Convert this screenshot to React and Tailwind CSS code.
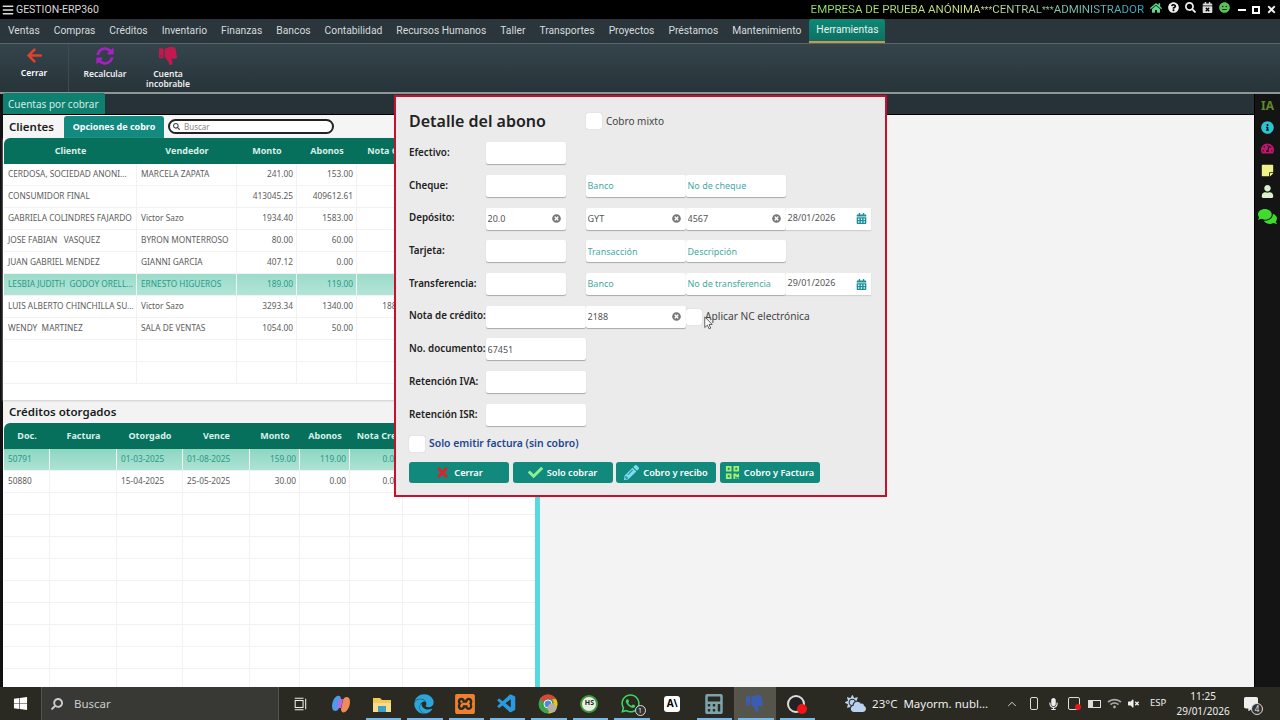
import {
  FaArrowLeft, FaSyncAlt, FaThumbsDown, FaHome, FaQuestionCircle, FaSearch, FaCalendarTimes, FaMeh,
  FaInfoCircle, FaTachometerAlt, FaStickyNote, FaUser, FaComments, FaTimes, FaCheck, FaPencilAlt,
  FaQrcode, FaTimesCircle, FaCalendarAlt, FaWindows, FaCalculator, FaEdge, FaWhatsapp,
  FaCloudSun, FaMicrophone, FaVolumeMute, FaWifi, FaCommentAlt, FaBars,
} from "react-icons/fa";
import { VscVscode } from "react-icons/vsc";
import { SiXampp } from "react-icons/si";
import { ChevronUp } from "lucide-react";

const menu = ["Ventas", "Compras", "Créditos", "Inventario", "Finanzas", "Bancos", "Contabilidad", "Recursos Humanos", "Taller", "Transportes", "Proyectos", "Préstamos", "Mantenimiento"];

const clientes = [
  ["CERDOSA, SOCIEDAD ANONI...", "MARCELA ZAPATA", "241.00", "153.00", ""],
  ["CONSUMIDOR FINAL", "", "413045.25", "409612.61", ""],
  ["GABRIELA COLINDRES FAJARDO", "Victor Sazo", "1934.40", "1583.00", ""],
  ["JOSE FABIAN   VASQUEZ", "BYRON MONTERROSO", "80.00", "60.00", ""],
  ["JUAN GABRIEL MENDEZ", "GIANNI GARCIA", "407.12", "0.00", ""],
  ["LESBIA JUDITH  GODOY ORELL...", "ERNESTO HIGUEROS", "189.00", "119.00", ""],
  ["LUIS ALBERTO CHINCHILLA SU...", "Victor Sazo", "3293.34", "1340.00", "1888.00"],
  ["WENDY  MARTINEZ", "SALA DE VENTAS", "1054.00", "50.00", ""],
  ["", "", "", "", ""],
  ["", "", "", "", ""],
];

const creditos = [
  ["50791", "", "01-03-2025", "01-08-2025", "159.00", "119.00", "0.00"],
  ["50880", "", "15-04-2025", "25-05-2025", "30.00", "0.00", "0.00"],
  ...Array.from({ length: 9 }, () => ["", "", "", "", "", "", ""]),
];

function Cell({ w, right, children }) {
  return (
    <div className={`${w} h-full shrink-0 flex items-center px-1 border-r border-[#f2f2f2] whitespace-pre overflow-hidden ${right ? "justify-end pr-[3px]" : ""}`}>
      {children}
    </div>
  );
}

function Field({ w = "w-[80px]", value, hint, clear, gap }) {
  return (
    <div className={`${w} ${gap || ""} h-[22px] shrink-0 bg-white rounded-[2px] shadow-[0_1px_1px_#a9a9a9] flex items-center pl-[1.5px] pr-[5px] text-[9px] text-[#555]`}>
      <span className={`flex-1 truncate ${hint ? "text-[#45aaa5]" : ""}`}>{value || hint}</span>
      {clear && <FaTimesCircle className="text-[9px] text-[#777] shrink-0" />}
    </div>
  );
}

function DateField({ value }) {
  return (
    <div className="w-[85px] h-[22px] shrink-0 flex items-center bg-white shadow-[0_1px_1px_#d0d0d0] pl-[1.5px] pr-[4px] text-[9px] text-[#555]">
      <span className="flex-1 -mt-[2px]">{value}</span>
      <FaCalendarAlt className="text-[11px] text-[#1b8f98]" />
    </div>
  );
}

function FormRow({ label, children }) {
  return (
    <div className="h-[32.7px] flex items-center">
      <div className="w-[77px] shrink-0 text-[9.8px] font-semibold text-[#222] whitespace-nowrap">{label}</div>
      {children}
    </div>
  );
}

function Check() {
  return <div className="w-[16px] h-[16px] bg-white rounded-[2px] shadow-[0_0_1px_#aaa] shrink-0" />;
}

function ModalButton({ icon, label }) {
  return (
    <button className="w-[100px] h-[21px] rounded-[3px] bg-[#11897d] text-white text-[9.2px] font-semibold flex items-center justify-center gap-[4px]">
      {icon}
      {label}
    </button>
  );
}

function TaskSlot({ children, active, running }) {
  return (
    <div className={`relative w-[41.4px] h-full shrink-0 flex items-center justify-center ${active ? "bg-[#55554c]" : ""}`}>
      {children}
      {running && <div className="absolute bottom-0 left-[4px] right-[2px] h-[2px] bg-[#76b9ed]" />}
    </div>
  );
}

export default function App() {
  return (
    <div className="relative w-[1280px] h-[720px] overflow-hidden bg-black font-['Noto_Sans',sans-serif]">
      {/* title bar */}
      <div className="h-[19px] bg-black flex items-center pl-[2px] text-[#d9d9d9] font-['Roboto',sans-serif]">
        <FaBars className="text-[12px] text-[#ddd]" />
        <span className="ml-[2px] text-[10.5px]">GESTION-ERP360</span>
        <div className="ml-auto flex items-center">
          <span className="text-[11.5px] bg-gradient-to-r from-[#8fe35a] via-[#cfe08a] to-[#2aa7c4] bg-clip-text text-transparent whitespace-nowrap">
            EMPRESA DE PRUEBA ANÓNIMA<span className="text-[9px]">***</span>CENTRAL<span className="text-[9px]">***</span>ADMINISTRADOR
          </span>
          <div className="ml-[6px] flex items-center gap-[6px] text-[11px] -mt-[4px]">
            <FaHome className="text-[#5fd38f] text-[12px]" />
            <FaQuestionCircle className="text-[#eee]" />
            <FaSearch className="text-[#eee]" />
            <FaCalendarTimes className="text-[#ddd]" />
            <FaMeh className="text-[#58c25a]" />
          </div>
          <div className="ml-[8px] mr-[3px] flex items-center gap-[6px] text-[#eee]">
            <div className="w-[8px] h-[2px] bg-white" />
            <div className="w-[8px] h-[8px] border-2 border-white" />
            <FaTimes className="text-[11px]" />
          </div>
        </div>
      </div>

      {/* menu */}
      <div className="h-[25px] bg-[#2a363c] border-b border-[#5a6569] flex items-end pl-[8px] text-[10.3px] text-[#d6dcdc] font-['Roboto',sans-serif]">
        <div className="flex gap-[14px] h-[24px] items-center">
          {menu.map((m) => <span key={m} className="whitespace-nowrap">{m}</span>)}
        </div>
        <div className="ml-[8px] w-[76px] h-[24px] rounded-t-[3px] bg-gradient-to-b from-[#0b8a76] to-[#0f6f63] border-b-2 border-[#c4994e] flex items-center justify-center text-[#e6f3f0]">Herramientas</div>
      </div>

      {/* toolbar */}
      <div className="h-[48px] bg-gradient-to-b from-[#35444b] to-[#27343a] flex border-b-2 border-[#8f9698] box-content">
        <div className="w-[69px] border-r border-[#3f4b50] flex flex-col items-center pt-[3px] text-white text-[8.5px] font-semibold">
          <FaArrowLeft className="text-[#e2412a] text-[17px]" />
          <span className="mt-[3px]">Cerrar</span>
        </div>
        <div className="w-[72px] flex flex-col items-center pt-[3px] text-[#eee] text-[8.5px] font-semibold">
          <FaSyncAlt className="text-[#a81fc4] text-[18px]" />
          <span className="mt-[3px]">Recalcular</span>
        </div>
        <div className="w-[54px] flex flex-col items-center pt-[3px] text-[#eee] text-[8.5px] font-semibold leading-[10px]">
          <FaThumbsDown className="text-[#c4194f] text-[18px] mb-[4px]" />
          <span>Cuenta</span>
          <span>incobrable</span>
        </div>
      </div>

      {/* work area */}
      <div className="h-[593px] flex">
        <div className="w-[3px] bg-[#111]" />
        <div className="w-[1252px] flex flex-col border-r border-black">
          <div className="h-[21px] bg-[#263238] border-b border-black flex items-end">
            <div className="w-[102px] h-[21px] rounded-t-[2px] bg-[#0d8070] text-[#d4ece6] text-[10px] flex items-center pl-[5px] pt-[2px] whitespace-nowrap">Cuentas por cobrar</div>
          </div>
          <div className="flex-1 flex min-h-0 bg-[#f3f3f3]">
            <div className="w-[532px] flex flex-col">
              <div className="h-[23px] flex items-center bg-[#f5f5f5] shrink-0">
                <span className="ml-[6px] text-[11.5px] font-semibold text-[#1b1b1b]">Clientes</span>
                <button className="ml-[10px] w-[100px] h-[22px] rounded-t-[3px] bg-[#128a80] text-white text-[9px] font-bold">Opciones de cobro</button>
                <div className="ml-[4px] w-[166px] h-[15px] rounded-full border-2 border-[#222] bg-white flex items-center pl-[3px] text-[8px] text-[#888]">
                  <FaSearch className="text-[7px] text-[#444] mr-[4px]" />
                  Buscar
                </div>
              </div>

              <div className="h-[262px] bg-white flex flex-col shrink-0 shadow-[0_1px_2px_#ccc] text-[8.3px] text-[#5c5c5c] pl-[1px]">
                <div className="h-[26px] shrink-0 rounded-t-[6px] bg-[#07705c] flex items-center pb-[1px] text-[#d7efe8] text-[9px] font-bold text-center">
                  <div className="w-[133px]">Cliente</div>
                  <div className="w-[100px]">Vendedor</div>
                  <div className="w-[60px]">Monto</div>
                  <div className="w-[60px]">Abonos</div>
                  <div className="w-[60px] whitespace-nowrap">Nota Cre</div>
                </div>
                {clientes.map((r, i) => (
                  <div key={i} className={`h-[22px] shrink-0 flex border-b border-[#f2f2f2] ${i === 5 ? "bg-gradient-to-b from-[#9bdccb] to-[#b2e4d7] text-[#2a9a88]" : ""}`}>
                    <Cell w="w-[133px]">{r[0]}</Cell>
                    <Cell w="w-[100px]">{r[1]}</Cell>
                    <Cell w="w-[60px]" right>{r[2]}</Cell>
                    <Cell w="w-[60px]" right>{r[3]}</Cell>
                    <Cell w="w-[60px]" right>{r[4]}</Cell>
                  </div>
                ))}
              </div>

              <div className="h-[23px] shrink-0 flex items-center pl-[6px] text-[11.5px] font-semibold text-[#1b1b1b]">Créditos otorgados</div>

              <div className="flex-1 min-h-0 bg-white flex flex-col overflow-hidden text-[8.3px] text-[#5c5c5c] pl-[1px]">
                <div className="h-[26px] shrink-0 rounded-t-[6px] bg-[#07705c] flex items-center text-[#d7efe8] text-[9px] font-bold text-center">
                  <div className="w-[46px]">Doc.</div>
                  <div className="w-[67px]">Factura</div>
                  <div className="w-[66px]">Otorgado</div>
                  <div className="w-[67px]">Vence</div>
                  <div className="w-[50px]">Monto</div>
                  <div className="w-[50px]">Abonos</div>
                  <div className="w-[53px] whitespace-nowrap">Nota Cre</div>
                </div>
                {creditos.map((r, i) => (
                  <div key={i} className={`h-[22px] shrink-0 flex border-b border-[#f2f2f2] ${i === 0 ? "bg-gradient-to-b from-[#8cd6c2] to-[#aee3d4] text-[#2a9a88]" : ""}`}>
                    <Cell w="w-[46px]">{r[0]}</Cell>
                    <Cell w="w-[67px]">{r[1]}</Cell>
                    <Cell w="w-[66px]">{r[2]}</Cell>
                    <Cell w="w-[67px]">{r[3]}</Cell>
                    <Cell w="w-[50px]" right>{r[4]}</Cell>
                    <Cell w="w-[50px]" right>{r[5]}</Cell>
                    <Cell w="w-[53px]" right>{r[6]}</Cell>
                    <div className="w-[66px] border-r border-[#f2f2f2]" />
                  </div>
                ))}
              </div>
            </div>
            <div className="w-[5px] bg-[#5ad9dc]" />
            <div className="flex-1 bg-[#f3f3f3]" />
          </div>
        </div>

        {/* right rail */}
        <div className="flex-1 bg-[#141414] flex flex-col items-center pt-[5px] gap-[8.6px] text-[13px]">
          <span className="text-[#5d8a2c] text-[12px] font-bold leading-[13px]">IA</span>
          <FaInfoCircle className="text-[#2cc4d0]" />
          <FaTachometerAlt className="text-[#c2166e]" />
          <FaStickyNote className="text-[#f0f08c]" />
          <FaUser className="text-[#d9f0cf]" />
          <FaComments className="text-[#3fdc2e] text-[19px]" />
        </div>
      </div>

      {/* taskbar */}
      <div className="h-[33px] bg-[#2a2a22] flex items-center text-[#eee]">
        <div className="w-[41px] h-full flex items-center justify-center">
          <FaWindows className="text-[15px] text-white" />
        </div>
        <div className="w-[238px] h-full bg-[#383835] border-x border-[#55554f] flex items-center pl-[9px] text-[11.5px] text-[#ccc]">
          <FaSearch className="text-[12px] -scale-x-100 mr-[11px]" />
          Buscar
        </div>
        <TaskSlot><svg viewBox="0 0 16 16" className="w-[14px] h-[14px]" fill="none" stroke="#eee" strokeWidth="1.2"><rect x="2.5" y="4" width="9" height="8" /><path d="M2 1.5h10M2 14.5h10M14.5 2v12" /></svg></TaskSlot>
        <TaskSlot>
          <svg viewBox="0 0 20 20" className="w-[20px] h-[20px]">
            <path d="M6 2c2-1 4 0 4 3l-2 9c-1 3-4 4-6 2-2-3-1-11 4-14z" fill="#4f9ae8" />
            <path d="M14 18c-2 1-4 0-4-3l2-9c1-3 4-4 6-2 2 3 1 11-4 14z" fill="#f08a5a" />
            <path d="M8 5h4l-2 9H6z" fill="#b86be0" />
          </svg>
        </TaskSlot>
        <TaskSlot running>
          <svg viewBox="0 0 20 18" className="w-[20px] h-[18px]">
            <path d="M1 3h7l2 2h9v12H1z" fill="#f0c95a" />
            <path d="M1 8h18v9H1z" fill="#f7dc8a" />
            <path d="M6 11h8v6H6z" fill="#3f9fc8" />
          </svg>
        </TaskSlot>
        <TaskSlot running><FaEdge className="text-[#2ba6d8] text-[20px]" /></TaskSlot>
        <TaskSlot running><SiXampp className="text-[#f07f2e] text-[20px]" /></TaskSlot>
        <TaskSlot running><VscVscode className="text-[#2a9ae0] text-[22px]" /></TaskSlot>
        <TaskSlot running>
          <svg viewBox="0 0 20 20" className="w-[20px] h-[20px]">
            <circle cx="10" cy="10" r="9.5" fill="#3fa34d" />
            <path d="M10 .5a9.5 9.5 0 0 1 8.2 4.75H10a4.75 4.75 0 0 0-4.1 2.4L1.8 5.25A9.5 9.5 0 0 1 10 .5z" fill="#dc4437" />
            <path d="M18.2 5.25A9.5 9.5 0 0 1 10 19.5l4.1-7.1a4.75 4.75 0 0 0 0-7.15z" fill="#f4c20d" />
            <circle cx="10" cy="10" r="4" fill="#4a8be0" stroke="#eee" />
            <circle cx="14" cy="14" r="4.5" fill="#b9ada0" />
          </svg>
        </TaskSlot>
        <TaskSlot running>
          <div className="w-[18px] h-[18px] rounded-full bg-[#e8f0e0] border-2 border-[#3f9a3f] text-[7px] font-bold text-[#222] flex items-center justify-center">HS</div>
        </TaskSlot>
        <TaskSlot running>
          <FaWhatsapp className="text-[#3ed65f] text-[21px]" />
          <div className="absolute right-[6px] bottom-[4px] w-[11px] h-[11px] rounded-full bg-[#333] border border-[#ddd] text-[7px] leading-[9px] text-center">1</div>
        </TaskSlot>
        <TaskSlot>
          <div className="w-[16px] h-[16px] rounded-[3px] bg-white text-black text-[10px] font-bold flex items-center justify-center">A\</div>
        </TaskSlot>
        <TaskSlot running><FaCalculator className="text-[#7ea3ad] text-[20px]" /></TaskSlot>
        <TaskSlot active running><FaThumbsDown className="text-[#3c5cb0] text-[17px]" /></TaskSlot>
        <TaskSlot running>
          <div className="w-[18px] h-[18px] rounded-full bg-[#222] border-2 border-[#ddd]" />
          <div className="absolute right-[10px] bottom-[6px] w-[10px] h-[10px] rounded-full bg-[#f01515]" />
        </TaskSlot>
        <FaCloudSun className="ml-[28px] text-[#b8d2f0] text-[21px] shrink-0" />
        <span className="ml-[6px] w-[129px] text-[11.5px] whitespace-pre shrink-0">23°C  Mayorm. nubl...</span>
        <div className="w-[22px] flex justify-center shrink-0"><ChevronUp size={14} strokeWidth={1.5} /></div>
        <div className="w-[21px] flex justify-center shrink-0"><div className="w-[8px] h-[13px] rounded-[2px] border border-[#ddd]" /></div>
        <FaMicrophone className="w-[19px] text-[12px] shrink-0" />
        <div className="relative w-[21px] flex justify-center shrink-0">
          <div className="w-[12px] h-[13px] border border-[#ddd] rounded-[2px]" />
          <div className="absolute right-[3px] bottom-0 w-[6px] h-[6px] rounded-full bg-[#e81818]" />
        </div>
        <div className="w-[21px] flex justify-center shrink-0"><div className="w-[13px] h-[8px] border border-[#ddd] border-l-[5px]" /></div>
        <FaWifi className="w-[19px] text-[11px] text-[#aaa] shrink-0" />
        <FaVolumeMute className="w-[19px] text-[11px] shrink-0" />
        <span className="w-[30px] text-center text-[9.5px] shrink-0">ESP</span>
        <div className="w-[60px] text-center text-[10px] leading-[15px] shrink-0">
          <div>11:25</div>
          <div>29/01/2026</div>
        </div>
        <div className="relative ml-[3px] w-[30px] flex justify-center shrink-0">
          <FaCommentAlt className="text-[14px]" />
          <div className="absolute right-[3px] -bottom-[4px] w-[12px] h-[12px] rounded-full bg-[#333] border border-[#ddd] text-[8px] leading-[10px] text-center">4</div>
        </div>
      </div>

      {/* detail dialog */}
      <div className="absolute left-[394px] top-[95px] w-[493px] h-[402px] border-2 border-[#c8102e] bg-[#ebebeb] pl-[13px] pt-[8px]">
        <div className="h-[32px] flex items-center">
          <span className="w-[177px] text-[16px] font-semibold text-[#222]">Detalle del abono</span>
          <Check />
          <span className="ml-[4px] text-[10px] text-[#444]">Cobro mixto</span>
        </div>
        <FormRow label="Efectivo:"><Field /></FormRow>
        <FormRow label="Cheque:">
          <Field />
          <Field w="w-[100px]" gap="ml-[20px]" hint="Banco" />
          <Field w="w-[100px]" hint="No de cheque" />
        </FormRow>
        <FormRow label="Depósito:">
          <Field value="20.0" clear />
          <Field w="w-[100px]" gap="ml-[20px]" value="GYT" clear />
          <Field w="w-[100px]" value="4567" clear />
          <DateField value="28/01/2026" />
        </FormRow>
        <FormRow label="Tarjeta:">
          <Field />
          <Field w="w-[100px]" gap="ml-[20px]" hint="Transacción" />
          <Field w="w-[100px]" hint="Descripción" />
        </FormRow>
        <FormRow label="Transferencia:">
          <Field />
          <Field w="w-[100px]" gap="ml-[20px]" hint="Banco" />
          <Field w="w-[100px]" hint="No de transferencia" />
          <DateField value="29/01/2026" />
        </FormRow>
        <FormRow label="Nota de crédito:">
          <Field w="w-[100px]" />
          <Field w="w-[100px]" value="2188" clear />
          <Check />
          <span className="ml-[3px] text-[10.2px] text-[#444] whitespace-nowrap">Aplicar NC electrónica</span>
        </FormRow>
        <FormRow label="No. documento:"><Field w="w-[100px]" value="67451" /></FormRow>
        <FormRow label="Retención IVA:"><Field w="w-[100px]" /></FormRow>
        <FormRow label="Retención ISR:"><Field w="w-[100px]" /></FormRow>
        <div className="h-[26px] flex items-center">
          <Check />
          <span className="ml-[4px] text-[10.4px] font-semibold text-[#1f4690]">Solo emitir factura (sin cobro)</span>
        </div>
        <div className="mt-[5px] flex gap-[3.5px]">
          <ModalButton label="Cerrar" icon={<FaTimes className="text-[#e0212c] text-[15px]" />} />
          <ModalButton label="Solo cobrar" icon={<FaCheck className="text-[#8ff08f] text-[15px]" />} />
          <ModalButton label="Cobro y recibo" icon={<FaPencilAlt className="text-[#7fdcf0] text-[15px]" />} />
          <ModalButton label="Cobro y Factura" icon={<FaQrcode className="text-[#a8ee70] text-[15px]" />} />
        </div>
      </div>

      {/* mouse pointer */}
      <svg viewBox="0 0 12 18" className="absolute left-[704px] top-[316px] w-[9px] h-[14px]">
        <path d="M1 1v14l3.5-3.2 2.3 5 2.2-1-2.3-4.9H11z" fill="#fff" stroke="#333" strokeWidth="1" />
      </svg>
    </div>
  );
}
